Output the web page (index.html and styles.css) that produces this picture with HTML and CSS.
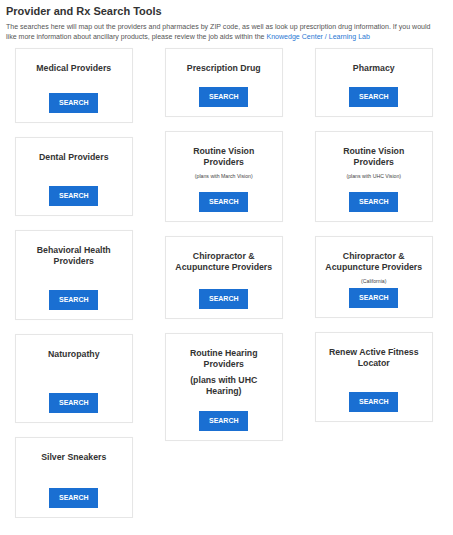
FILE: index.html
```html
<!DOCTYPE html>
<html lang="en">
<head>
<meta charset="utf-8">
<title>Provider and Rx Search Tools</title>
<link rel="stylesheet" href="styles.css">
</head>
<body>
<h1 class="page-title">Provider and Rx Search Tools</h1>
<p class="intro">The searches here will map out the providers and pharmacies by ZIP code, as well as look up prescription drug information. If you would like more information about ancillary products, please review the job aids within the <a class="intro-link" href="#">Knowedge Center / Learning Lab</a></p>

<div class="tools">
  <div class="tool-col">
    <div class="card">
      <div class="card-title">Medical Providers</div>
      <button class="btn gap-19">SEARCH</button>
    </div>
    <div class="card">
      <div class="card-title">Dental Providers</div>
      <button class="btn gap-23">SEARCH</button>
    </div>
    <div class="card">
      <div class="card-title">Behavioral Health<br>Providers</div>
      <button class="btn gap-23">SEARCH</button>
    </div>
    <div class="card">
      <div class="card-title">Naturopathy</div>
      <button class="btn gap-33">SEARCH</button>
    </div>
    <div class="card">
      <div class="card-title">Silver Sneakers</div>
      <button class="btn gap-25">SEARCH</button>
    </div>
  </div>

  <div class="tool-col">
    <div class="card">
      <div class="card-title">Prescription Drug</div>
      <button class="btn gap-13">SEARCH</button>
    </div>
    <div class="card">
      <div class="card-title">Routine Vision<br>Providers</div>
      <div class="card-note">(plans with March Vision)</div>
      <button class="btn gap-12">SEARCH</button>
    </div>
    <div class="card">
      <div class="card-title">Chiropractor &amp;<br>Acupuncture Providers</div>
      <button class="btn gap-16">SEARCH</button>
    </div>
    <div class="card">
      <div class="card-title">Routine Hearing<br>Providers</div>
      <div class="card-sub">(plans with UHC<br>Hearing)</div>
      <button class="btn gap-13">SEARCH</button>
    </div>
  </div>

  <div class="tool-col">
    <div class="card">
      <div class="card-title">Pharmacy</div>
      <button class="btn gap-13">SEARCH</button>
    </div>
    <div class="card">
      <div class="card-title">Routine Vision<br>Providers</div>
      <div class="card-note">(plans with UHC Vision)</div>
      <button class="btn gap-12">SEARCH</button>
    </div>
    <div class="card">
      <div class="card-title">Chiropractor &amp;<br>Acupuncture Providers</div>
      <div class="card-note">(California)</div>
      <button class="btn gap-3">SEARCH</button>
    </div>
    <div class="card">
      <div class="card-title">Renew Active Fitness<br>Locator</div>
      <button class="btn gap-23">SEARCH</button>
    </div>
  </div>
</div>
</body>
</html>
```

FILE: styles.css
```css
html, body {
  margin: 0;
  padding: 0;
  background: #ffffff;
}

body {
  padding: 0 6px;
  font-family: "Liberation Sans", Arial, Helvetica, sans-serif;
  color: #333333;
}

.page-title {
  margin: 5px 0 0;
  font-size: 11px;
  line-height: 13px;
  font-weight: 700;
  color: #333333;
}

.intro {
  margin: 4px 0 0;
  font-size: 7.05px;
  line-height: 9.7px;
  color: #555555;
  max-width: 436px;
}

.intro-link {
  color: #2a78d4;
  text-decoration: none;
}

.tools {
  display: grid;
  grid-template-columns: repeat(3, 117.5px);
  column-gap: 32.5px;
  margin: 6.5px 0 0 9px;
  align-items: start;
}

.tool-col {
  display: flex;
  flex-direction: column;
  gap: 14px;
}

.card {
  display: flex;
  flex-direction: column;
  align-items: center;
  text-align: center;
  border: 1px solid #e6e6e6;
  box-shadow: 0 0 1px rgba(0, 0, 0, 0.04);
  background: #ffffff;
  padding: 14px 4px 9px;
}

.card-title {
  font-size: 8.75px;
  line-height: 11px;
  font-weight: 700;
  color: #333333;
}

.card-note {
  margin-top: 4px;
  font-size: 5.2px;
  line-height: 8px;
  color: #444444;
}

.card-sub {
  margin-top: 5px;
  font-size: 8.75px;
  line-height: 11.4px;
  font-weight: 700;
  color: #333333;
}

.btn {
  display: block;
  width: 49px;
  height: 20px;
  padding: 0;
  border: 0;
  background: #1a6fd2;
  color: #ffffff;
  font-family: "Liberation Sans", Arial, Helvetica, sans-serif;
  font-size: 7px;
  font-weight: 700;
  line-height: 20px;
  cursor: pointer;
}

.gap-3 { margin-top: 3px; }
.gap-12 { margin-top: 12px; }
.gap-13 { margin-top: 13px; }
.gap-16 { margin-top: 16px; }
.gap-19 { margin-top: 19px; }
.gap-23 { margin-top: 23px; }
.gap-25 { margin-top: 25px; }
.gap-33 { margin-top: 33px; }
```
